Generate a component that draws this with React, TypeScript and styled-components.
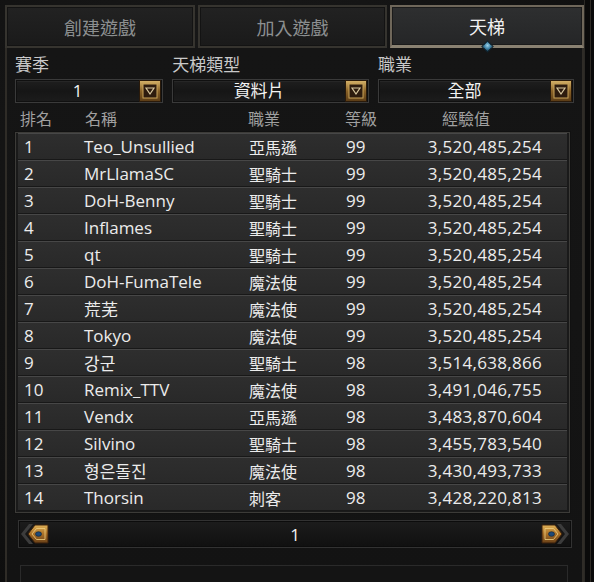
import React from "react";
import styled, { createGlobalStyle, css } from "styled-components";

const Global = createGlobalStyle`
  html, body { margin: 0; padding: 0; background: #0c0c0c; }
  body { font-family: "Open Sans", "Noto Sans CJK TC", sans-serif; }
  * { box-sizing: border-box; }
`;

const FONT = `"Open Sans", "Noto Sans CJK TC", "Noto Sans CJK KR", sans-serif`;

const Page = styled.div`
  width: 594px;
  height: 582px;
  overflow: hidden;
  background: radial-gradient(ellipse at 40% 30%, #1a1a1a 0%, #111 70%, #0b0b0b 100%);
  display: flex;
  flex-direction: column;
  padding: 5px 10px 0 5px;
  font-family: ${FONT};
  position: relative;
`;

const RightFrame = styled.div`
  position: absolute;
  top: 0;
  right: 0;
  width: 10px;
  height: 582px;
  background: #0a0a0a;
  border-left: 1px solid #2a2824;
  &::after {
    content: "";
    position: absolute;
    left: 5px;
    top: 0;
    bottom: 0;
    width: 1px;
    background: #2e2b26;
  }
`;

const TabBar = styled.div`
  display: flex;
  gap: 3px;
  height: 43px;
`;

const Tab = styled.div<{ $active?: boolean; $w: number }>`
  position: relative;
  width: ${(p) => p.$w}px;
  height: 43px;
  display: flex;
  align-items: center;
  justify-content: center;
  font-size: 18px;
  font-family: ${FONT};
  color: #8c8f90;
  background: linear-gradient(180deg, #222 0%, #1a1a1a 100%);
  border: 2px solid #36342f;
  box-shadow: inset 0 0 0 1px #131313;
  ${(p) =>
    p.$active &&
    css`
      color: #f2f2f2;
      background: linear-gradient(180deg, #2e2f30 0%, #252627 100%);
      border: 2px solid #6f675a;
      border-bottom: 3px solid #8a8272;
      box-shadow: inset 0 0 0 1px #1b1b1b;
    `}
`;

const Gem = styled.div`
  position: absolute;
  left: 50%;
  bottom: -6px;
  width: 9px;
  height: 9px;
  margin-left: -4px;
  transform: rotate(45deg);
  background: radial-gradient(circle at 40% 40%, #9fd3ea 0%, #3b7fa3 55%, #173446 100%);
  border: 1px solid #0f2430;
`;

const Panel = styled.div`
  flex: 1;
  display: flex;
  flex-direction: column;
  border-left: 2px solid #2f2c27;
  border-right: 2px solid #2f2c27;
  background: linear-gradient(180deg, #151515 0%, #131313 100%);
  padding: 6px 8px 0 8px;
`;

const Filters = styled.div`
  display: flex;
  gap: 9px;
`;

const FilterGroup = styled.div<{ $w: number }>`
  width: ${(p) => p.$w}px;
  display: flex;
  flex-direction: column;
`;

const FilterLabel = styled.div`
  font-size: 17px;
  line-height: 22px;
  color: #c9c9c9;
  height: 25px;
`;

const Select = styled.div`
  height: 24px;
  display: flex;
  align-items: center;
  background: linear-gradient(180deg, #1f1f1f 0%, #161616 50%, #1c1c1c 100%);
  border: 1px solid #3a3a3a;
  box-shadow: inset 0 0 0 1px #101010, inset 0 2px 0 #262626;
  padding-right: 1px;
`;

const SelectValue = styled.div`
  flex: 1;
  text-align: center;
  font-size: 17px;
  line-height: 22px;
  color: #f3f3f3;
`;

const DropBtn = () => (
  <svg width="22" height="22" viewBox="0 0 22 22">
    <defs>
      <linearGradient id="dbg" x1="0" y1="0" x2="0" y2="1">
        <stop offset="0" stopColor="#d7b46a" />
        <stop offset="0.5" stopColor="#8a6328" />
        <stop offset="1" stopColor="#5a3b16" />
      </linearGradient>
    </defs>
    <rect x="0.5" y="0.5" width="21" height="21" fill="url(#dbg)" stroke="#2a1a0a" />
    <rect x="4" y="4" width="14" height="14" fill="#2e1c0e" stroke="#c9a35a" strokeWidth="1" />
    <path d="M7 8 L15 8 L11 14 Z" fill="none" stroke="#d8c8a0" strokeWidth="1.2" />
  </svg>
);

const HeaderRow = styled.div`
  display: grid;
  grid-template-columns: 65px 163px 97px 97px 1fr;
  padding-left: 5px;
  height: 29px;
  align-items: center;
  font-size: 16px;
  color: #a0a0a0;
`;

const Table = styled.div`
  width: 555px;
  border: 1px solid #3c3b38;
  box-shadow: 0 0 0 1px #111;
  background: #1a1a1a;
  display: flex;
  flex-direction: column;
  padding: 0 2px 1px 2px;
`;

const Row = styled.div`
  display: grid;
  grid-template-columns: 60px 165px 97px 80px 116px;
  padding-left: 6px;
  height: 27px;
  align-items: center;
  font-size: 17px;
  color: #ececec;
  background: linear-gradient(180deg, #2e2e2e 0%, #292929 100%);
  border-top: 1px solid #474747;
  border-bottom: 1px solid #181818;
`;

const Cell = styled.div<{ $right?: boolean; $small?: boolean }>`
  white-space: nowrap;
  text-align: ${(p) => (p.$right ? "right" : "left")};
  ${(p) => p.$right && css`letter-spacing: 0.3px;`}
  ${(p) => p.$small && css`font-size: 16px;`}
`;

const Pager = styled.div`
  margin: 7px 0 0 3px;
  width: 554px;
  height: 28px;
  display: flex;
  align-items: center;
  justify-content: space-between;
  background: linear-gradient(180deg, #1c1c1c 0%, #101010 100%);
  border: 1px solid #323232;
  box-shadow: inset 0 0 0 1px #0c0c0c;
  padding: 0 1px;
`;

const PageNum = styled.div`
  font-size: 17px;
  color: #f0f0f0;
`;

const Arrow = ({ dir }: { dir: "left" | "right" }) => (
  <svg
    width="30"
    height="24"
    viewBox="0 0 30 24"
    style={dir === "right" ? { transform: "scaleX(-1)" } : undefined}
  >
    <defs>
      <linearGradient id={`ag${dir}`} x1="0" y1="0" x2="0" y2="1">
        <stop offset="0" stopColor="#e0b258" />
        <stop offset="0.5" stopColor="#a86f26" />
        <stop offset="1" stopColor="#6a4118" />
      </linearGradient>
    </defs>
    <path d="M1 12 L9 2 L13 2 L5 12 L13 22 L9 22 Z" fill="#3c3c3c" />
    <path d="M8 12 L15 3 L28 3 L28 21 L15 21 Z" fill={`url(#ag${dir})`} stroke="#3a200c" strokeWidth="1" />
    <path d="M12 12 L16.5 6.5 L25 6.5 L25 17.5 L16.5 17.5 Z" fill="none" stroke="#f0cf80" strokeWidth="0.8" />
    <ellipse cx="18.5" cy="12" rx="3" ry="2.3" fill="#1d4a78" stroke="#0b1f33" strokeWidth="0.6" />
  </svg>
);

const BottomBox = styled.div`
  margin: 17px 0 0 5px;
  width: 548px;
  flex: 1;
  border: 1px solid #2a2a2a;
  border-bottom: none;
  background: #141414;
`;

const rows: [string, string, string, string, string][] = [
  ["1", "Teo_Unsullied", "亞馬遜", "99", "3,520,485,254"],
  ["2", "MrLlamaSC", "聖騎士", "99", "3,520,485,254"],
  ["3", "DoH-Benny", "聖騎士", "99", "3,520,485,254"],
  ["4", "Inflames", "聖騎士", "99", "3,520,485,254"],
  ["5", "qt", "聖騎士", "99", "3,520,485,254"],
  ["6", "DoH-FumaTele", "魔法使", "99", "3,520,485,254"],
  ["7", "荒芜", "魔法使", "99", "3,520,485,254"],
  ["8", "Tokyo", "魔法使", "99", "3,520,485,254"],
  ["9", "강군", "聖騎士", "98", "3,514,638,866"],
  ["10", "Remix_TTV", "魔法使", "98", "3,491,046,755"],
  ["11", "Vendx", "亞馬遜", "98", "3,483,870,604"],
  ["12", "Silvino", "聖騎士", "98", "3,455,783,540"],
  ["13", "형은돌진", "魔法使", "98", "3,430,493,733"],
  ["14", "Thorsin", "刺客", "98", "3,428,220,813"],
];

export default function App() {
  return (
    <>
      <Global />
      <Page>
        <RightFrame />
        <TabBar>
          <Tab $w={190}>創建遊戲</Tab>
          <Tab $w={189}>加入遊戲</Tab>
          <Tab $w={194} $active>
            天梯
            <Gem />
          </Tab>
        </TabBar>
        <Panel>
          <Filters>
            <FilterGroup $w={149}>
              <FilterLabel>賽季</FilterLabel>
              <Select>
                <SelectValue>1</SelectValue>
                <DropBtn />
              </Select>
            </FilterGroup>
            <FilterGroup $w={198}>
              <FilterLabel>天梯類型</FilterLabel>
              <Select>
                <SelectValue>資料片</SelectValue>
                <DropBtn />
              </Select>
            </FilterGroup>
            <FilterGroup $w={197}>
              <FilterLabel>職業</FilterLabel>
              <Select>
                <SelectValue>全部</SelectValue>
                <DropBtn />
              </Select>
            </FilterGroup>
          </Filters>
          <HeaderRow>
            <div>排名</div>
            <div>名稱</div>
            <div>職業</div>
            <div>等級</div>
            <div>經驗值</div>
          </HeaderRow>
          <Table>
            {rows.map((r) => (
              <Row key={r[0]}>
                <Cell>{r[0]}</Cell>
                <Cell>{r[1]}</Cell>
                <Cell $small>{r[2]}</Cell>
                <Cell>{r[3]}</Cell>
                <Cell $right>{r[4]}</Cell>
              </Row>
            ))}
          </Table>
          <Pager>
            <Arrow dir="left" />
            <PageNum>1</PageNum>
            <Arrow dir="right" />
          </Pager>
          <BottomBox />
        </Panel>
      </Page>
    </>
  );
}
